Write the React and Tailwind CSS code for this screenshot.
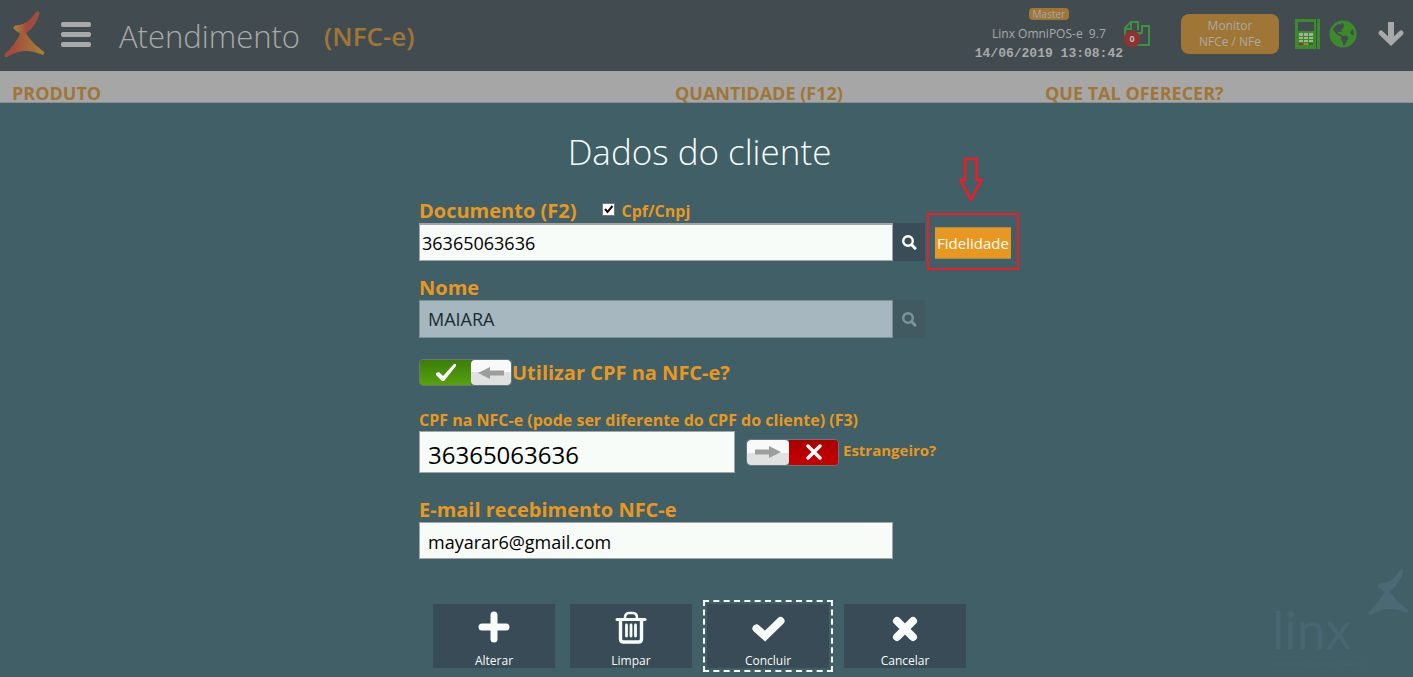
import React from 'react'
import { FaGlobeAmericas } from 'react-icons/fa'

const STAR = 'M98 2 Q105 -1 106 7 Q95 43 66 67 Q84 96 120 122 Q124 133 112 130 Q60 106 10 137 Q0 141 2 129 Q32 102 49 67 Q36 60 29 53 Q27 42 42 42 Q70 43 98 2 Z'

const Logo = () => (
  <svg className="w-[41px] h-[47px]" viewBox="0 0 123 140" aria-label="Linx" role="img">
    <defs>
      <linearGradient id="logo-fill" x1="0" x2="1" y1="0" y2="0">
        <stop offset="0.2" stopColor="#a44a3c" />
        <stop offset="0.5" stopColor="#a55f39" />
        <stop offset="0.9" stopColor="#a67c38" />
      </linearGradient>
      <linearGradient id="logo-top" x1="0.1" x2="0.5" y1="0" y2="0">
        <stop offset="0" stopColor="#a67c38" />
        <stop offset="1" stopColor="#a44a3c" />
      </linearGradient>
    </defs>
    <path d={STAR} fill="url(#logo-fill)" />
    <path d="M98 2 Q105 -1 106 7 Q95 43 66 67 L49 67 Q36 60 29 53 Q27 42 42 42 Q70 43 98 2 Z" fill="url(#logo-top)" />
  </svg>
)

const SearchIcon = () => (
  <svg className="w-4 h-4" viewBox="0 0 16 16" fill="none" stroke="currentColor" aria-hidden="true">
    <circle cx="7" cy="7" r="4.8" strokeWidth="2.4" />
    <path d="M10.5 10.5 L14 14.2" strokeWidth="3" strokeLinecap="round" />
  </svg>
)

const DocsIcon = () => (
  <svg className="w-7 h-7" viewBox="0 0 28 28" aria-hidden="true">
    <g fill="none" stroke="#3f8f45" strokeWidth="2">
      <path d="M2 16 V8 L8 2 H15 V10 M2 9 H8 V2" />
      <path d="M19 6 H26 V25 H12 V18 L19 12 Z M12 13 H19 V6" />
    </g>
    <circle cx="9" cy="19" r="8.5" fill="#8b3432" />
    <text x="9" y="22" textAnchor="middle" fontSize="9" fontWeight="bold" fill="#b9b9b9">0</text>
  </svg>
)

const PosIcon = () => (
  <svg className="w-[26px] h-[30px]" viewBox="0 0 26 30" aria-hidden="true">
    <path d="M0 0 H21 V30 H0 Z M22 0 H25 V30 H22 Z" fill="#3c8a29" />
    <rect x="3" y="3" width="16" height="9" fill="#424c50" />
    <path d="M4 14 h4 v3 h-4z M9 14 h4 v3 h-4z M14 14 h4 v3 h-4z M4 18 h4 v2 h-4z M9 18 h4 v2 h-4z M14 18 h4 v2 h-4z M4 21 h4 v2 h-4z M9 21 h4 v2 h-4z M14 21 h4 v2 h-4z" fill="#a0b49a" />
    <rect x="4" y="24" width="4" height="2" fill="#9c2f2a" />
    <rect x="9" y="24" width="4" height="2" fill="#a3862a" />
    <rect x="14" y="24" width="4" height="2" fill="#2d6b20" />
  </svg>
)

const icons = {
  plus: <path d="M16 4 V28 M4 16 H28" strokeWidth="7" />,
  trash: (
    <>
      <path d="M2 8.5 H30" strokeWidth="3" />
      <path d="M5.5 9 V28 Q5.5 31 8.5 31 H23.5 Q26.5 31 26.5 28 V9" strokeWidth="3.4" />
      <path d="M10 7 Q10 2 14 2 H18 Q22 2 22 7" strokeWidth="2.6" />
      <path d="M11.5 14 V25 M16 14 V25 M20.5 14 V25" strokeWidth="2.8" />
    </>
  ),
  check: <path d="M4.5 17.5 L13 25 L28.5 10" strokeWidth="8" strokeLinejoin="miter" />,
  close: <path d="M8 10 L24 26 M24 10 L8 26" strokeWidth="8" />,
}

const ActionButton = ({ icon, label, focused }) => (
  <button
    type="button"
    className={
      'w-[122px] h-16 pt-[7px] bg-[#394b56] text-[#f8fcf9] text-xs flex flex-col items-center justify-between ' +
      (focused ? 'outline-2 outline-dashed outline-offset-2 outline-[#f8fcf9]' : '')
    }
  >
    <svg className="w-8 h-8 overflow-visible" viewBox="0 0 32 32" fill="none" stroke="currentColor" strokeLinecap="round" aria-hidden="true">
      {icons[icon]}
    </svg>
    <span className="leading-[15px]">{label}</span>
  </button>
)

const Toggle = ({ id, on }) => (
  <span className="relative flex w-[93px] h-[27px] shrink-0 rounded border border-[#66767c] overflow-hidden">
    <input id={id} type="checkbox" defaultChecked={on} className="absolute inset-0 w-full h-full opacity-0" />
    {on ? (
      <>
        <span className="w-[51px] bg-linear-to-b from-[#3c7d0b] to-[#57a30c] flex items-center justify-center">
          <svg className="w-5 h-5" viewBox="0 0 20 20" fill="#fff" aria-hidden="true">
            <path d="M0 10 L3 9 L7 13 L18 1 H20 V3 L8 18 H6 L0 12 Z" />
          </svg>
        </span>
        <span className="flex-1 rounded-sm bg-linear-to-b from-[#f9f9f9] from-50% to-[#dfe2e0] to-50% flex items-center justify-center">
          <svg className="w-[26px] h-3" viewBox="0 0 26 12" fill="#9b9f9c" aria-hidden="true">
            <path d="M0 6 L12 0 V3.5 H26 V8.5 H12 V12 Z" />
          </svg>
        </span>
      </>
    ) : (
      <>
        <span className="w-[42px] rounded-sm bg-linear-to-b from-[#f9f9f9] from-50% to-[#dfe2e0] to-50% flex items-center justify-center">
          <svg className="w-[26px] h-3" viewBox="0 0 26 12" fill="#9b9f9c" aria-hidden="true">
            <path d="M26 6 L14 0 V3.5 H0 V8.5 H14 V12 Z" />
          </svg>
        </span>
        <span className="flex-1 bg-linear-to-b from-[#a80000] to-[#c80000] flex items-center justify-center">
          <svg className="w-4 h-4" viewBox="0 0 16 16" stroke="#fff" strokeWidth="3.4" strokeLinecap="round" aria-hidden="true">
            <path d="M2 2 L14 14 M14 2 L2 14" />
          </svg>
        </span>
      </>
    )}
  </span>
)

const Header = () => (
  <header className="h-[71px] pb-[3px] bg-[#424c50] text-[#a9a9a9] flex items-center justify-between pl-1 pr-2">
    <div className="flex items-center">
      <Logo />
      <button type="button" aria-label="Menu" className="ml-4 w-[30px] flex flex-col gap-[5px]">
        <span className="h-[5px] rounded-xs bg-[#a9a9a9]" />
        <span className="h-[5px] rounded-xs bg-[#a9a9a9]" />
        <span className="h-[5px] rounded-xs bg-[#a9a9a9]" />
      </button>
      <h1 className="ml-7 mt-1 text-[31px] leading-10 font-light">Atendimento</h1>
      <span className="ml-6 mt-1 text-[26px] leading-10 font-semibold text-[#9f7636]">(NFC-e)</span>
    </div>
    <div className="flex items-center">
      <div className="mt-1 flex flex-col items-center">
        <span className="h-3 px-1 rounded-sm bg-[#9f7636] text-[10px] leading-3">Master</span>
        <span className="mt-1 text-xs leading-5">Linx OmniPOS-e &nbsp;9.7</span>
        <time className="font-['Liberation_Mono',monospace] font-bold text-[13px] leading-5">14/06/2019 13:08:42</time>
      </div>
      <DocsIcon />
      <button type="button" className="ml-[30px] w-[98px] h-10 rounded-lg bg-[#9f7636] text-xs leading-4">
        Monitor<br />NFCe / NFe
      </button>
      <span className="ml-4"><PosIcon /></span>
      <FaGlobeAmericas className="ml-2 w-7 h-7 text-[#3c8a29]" />
      <button type="button" aria-label="Descer" className="ml-5">
        <svg className="w-7 h-7" viewBox="0 0 28 28" fill="none" stroke="currentColor" strokeWidth="6" strokeLinecap="round" aria-hidden="true">
          <path d="M14 2 V22" strokeLinecap="butt" />
          <path d="M4 13 L14 22.5 L24 13" strokeWidth="5" />
        </svg>
      </button>
    </div>
  </header>
)

const Watermark = () => (
  <div className="absolute right-1 bottom-[9px] flex items-start select-none" aria-hidden="true">
    <div className="mt-[29px] w-24 text-[#486671] whitespace-nowrap">
      <div className="font-['Lato',sans-serif] text-[52px] leading-[62px]">linx</div>
      <div className="text-[6px] leading-2">SOFTWARE QUE MOVE O VAREJO</div>
    </div>
    <svg className="w-[41px] h-[47px]" viewBox="0 0 123 140" fill="#4b6975">
      <path d={STAR} />
    </svg>
  </div>
)

const labelClass = 'text-xl leading-6 font-bold'
const inputClass = 'bg-[#f8fcf9] border border-[#a3a4aa] text-black text-lg'

export default function App() {
  return (
    <div className="min-h-screen flex flex-col bg-[#405f66] font-['Open_Sans',sans-serif]">
      <Header />
      <div className="pt-[14px] pl-3 bg-[#a6a6a6] border-b border-[#8b8f90] text-[#9f7636] text-lg leading-[17px] font-bold grid grid-cols-[663fr_370fr_368fr]">
        <span>PRODUTO</span>
        <span>QUANTIDADE (F12)</span>
        <span>QUE TAL OFERECER?</span>
      </div>

      <main className="relative flex-1 pr-[14px] pt-6 flex flex-col items-center">
        <h2 className="text-[35px] leading-[50px] font-light text-[#f8fcf9]">Dados do cliente</h2>

        <form className="mt-[22px] w-[561px] text-[#e89820]">
          <div className="flex items-center">
            <label htmlFor="documento" className={labelClass}>Documento (F2)</label>
            <input id="cpfcnpj" type="checkbox" defaultChecked className="ml-[26px] mb-1 w-[13px] h-[13px] appearance-none bg-white border border-[#777] peer" />
            <svg className="hidden peer-checked:block -ml-[13px] mb-1 w-[13px] h-[13px] pointer-events-none relative" viewBox="0 0 13 13" fill="none" stroke="#111" strokeWidth="2" aria-hidden="true">
              <path d="M3 6 L5.5 9 L10.5 3" />
            </svg>
            <label htmlFor="cpfcnpj" className="ml-1.5 text-base leading-6 font-bold">Cpf/Cnpj</label>
          </div>
          <div className="flex">
            <input id="documento" type="text" defaultValue="36365063636" className={`${inputClass} w-[474px] h-[38px] shrink-0 border-t-2 px-0.5`} />
            <button type="button" aria-label="Buscar documento" className="w-8 h-[38px] shrink-0 bg-[#3a4c57] text-white flex items-center justify-center">
              <SearchIcon />
            </button>
            <div className="relative ml-[10px] mt-1 h-8">
              <button type="button" className="w-[76px] h-8 bg-[#e89820] border-y border-[#a98a45] text-[#f8fcf9] text-[15px] whitespace-nowrap flex items-center justify-center">
                Fidelidade
              </button>
              <span className="absolute -inset-x-2 -top-[14px] -bottom-[11px] border-2 border-[#ee1c25] pointer-events-none" />
              <svg className="absolute left-6 bottom-[57px] w-6 h-[45px]" viewBox="0 0 24 45" fill="none" stroke="#ee1c25" strokeWidth="2.6" aria-hidden="true">
                <path d="M6 2 H17.5 V23 H22.5 L12 42.5 L1.5 23 H6 Z" />
              </svg>
            </div>
          </div>

          <label htmlFor="nome" className={`${labelClass} block mt-[15px]`}>Nome</label>
          <div className="flex">
            <input id="nome" type="text" disabled defaultValue="MAIARA" className="w-[474px] h-[38px] px-2 bg-[#a6b7c0] border border-[#7b9094] text-[#1c2c33] text-lg" />
            <button type="button" disabled aria-label="Buscar nome" className="w-8 h-[38px] bg-[#415960] text-[#7795a0] flex items-center justify-center">
              <SearchIcon />
            </button>
          </div>

          <div className="mt-[21px] flex items-center">
            <Toggle id="utilizar" on />
            <label htmlFor="utilizar" className={labelClass}>Utilizar CPF na NFC-e?</label>
          </div>

          <label htmlFor="cpf" className="block mt-6 text-base leading-[21px] font-bold">
            CPF na NFC-e (pode ser diferente do CPF do cliente) (F3)
          </label>
          <div className="flex items-center">
            <input id="cpf" type="text" defaultValue="36365063636" className="w-[316px] h-[42px] px-2 pt-1 bg-[#f8fcf9] border border-[#a3a4aa] text-black text-2xl" />
            <span className="ml-[11px]"><Toggle id="estrangeiro" /></span>
            <label htmlFor="estrangeiro" className="ml-1 mb-1 text-[15px] font-bold">Estrangeiro?</label>
          </div>

          <label htmlFor="email" className={`${labelClass} block mt-[25px]`}>E-mail recebimento NFC-e</label>
          <input id="email" type="email" defaultValue="mayarar6@gmail.com" className={`${inputClass} block w-[474px] h-[37px] pt-0.5 px-2`} />

          <div className="mt-[45px] flex justify-center gap-[15px]">
            <ActionButton icon="plus" label="Alterar" />
            <ActionButton icon="trash" label="Limpar" />
            <ActionButton icon="check" label="Concluir" focused />
            <ActionButton icon="close" label="Cancelar" />
          </div>
        </form>
        <Watermark />
      </main>
    </div>
  )
}
